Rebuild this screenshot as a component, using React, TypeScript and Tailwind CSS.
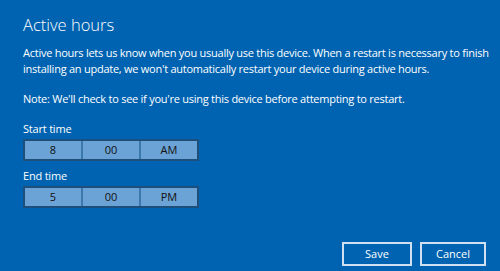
export default function App() {
  const rows = [
    { label: 'Start time', values: ['8', '00', 'AM'] },
    { label: 'End time', values: ['5', '00', 'PM'] },
  ];

  return (
    <div
      className="w-[500px] h-[271px] bg-[#0063b1] text-white flex flex-col pl-[23px] pr-[14px] pt-[12px] pb-[5px]"
      style={{ fontFamily: '"Open Sans", "Noto Sans", sans-serif' }}
    >
      <h1 className="text-[16.5px] leading-[26px] font-light">Active hours</h1>
      <p className="mt-[7px] -mr-[8px] text-[11px] leading-[16px] tracking-[-0.25px]">
        Active hours lets us know when you usually use this device. When a restart is necessary to finish
        installing an update, we won't automatically restart your device during active hours.
      </p>
      <p className="mt-[14px] text-[11px] leading-[16px] tracking-[-0.25px]">
        Note: We'll check to see if you're using this device before attempting to restart.
      </p>

      <div className="mt-[14px] flex flex-col">
        {rows.map((row, i) => (
          <div key={row.label} className={i > 0 ? 'mt-[7px]' : ''}>
            <div className="text-[11px] leading-[16px] mb-[2px] tracking-[-0.2px]">{row.label}</div>
            <div className="flex w-[176px] h-[22px] border-2 border-[#1d4f7d] bg-[#6ba3d6] text-[#111] text-[11px]">
              {row.values.map((v, j) => (
                <div
                  key={j}
                  className={`flex-1 flex items-center justify-center ${j > 0 ? 'border-l-2 border-[#3d78ad]' : ''}`}
                >
                  {v}
                </div>
              ))}
            </div>
          </div>
        ))}
      </div>

      <div className="mt-auto flex justify-end gap-[8px]">
        <button className="w-[70px] h-[24px] border-2 border-[#cfe0f1] text-[11px] text-white">Save</button>
        <button className="w-[66px] h-[24px] border-2 border-[#cfe0f1] text-[11px] text-white">Cancel</button>
      </div>
    </div>
  );
}
